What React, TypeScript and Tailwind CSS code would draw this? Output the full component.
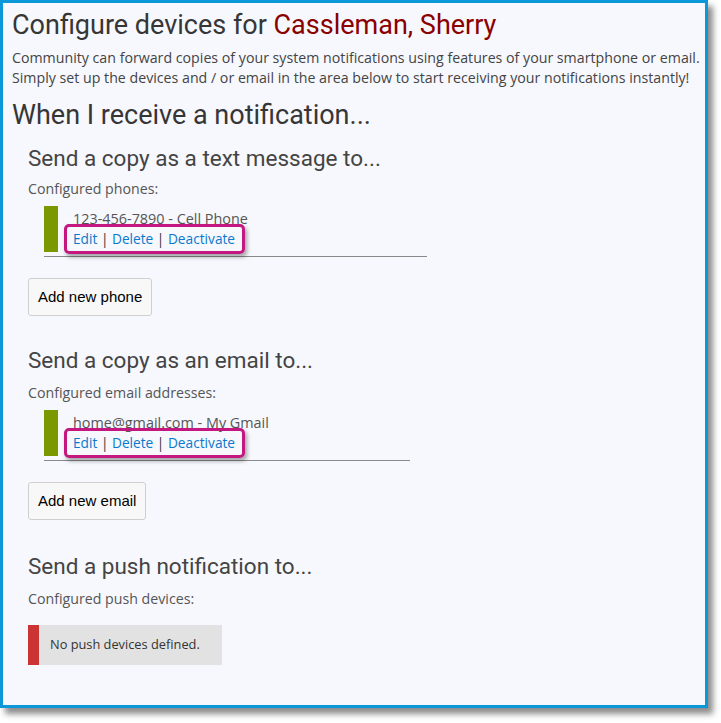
import React from "react";

function Item({ text, width }: { text: string; width: string }) {
  return (
    <div className={`ml-4 ${width}`}>
      <div className="flex items-stretch">
        <div className="w-[14px] bg-[#7a9900]" />
        <div className="pl-[15px] py-[3px] leading-[20px]">
          <div className="text-[#555] text-[14.4px]">{text}</div>
          <div className="text-[#0a78cc] text-[13.7px] relative">
            <span>Edit</span>
            <span className="text-[#333]"> | </span>
            <span>Delete</span>
            <span className="text-[#333]"> | </span>
            <span>Deactivate</span>
            <div className="absolute -left-[9px] -top-[5px] w-[181px] h-[30px] border-[3px] border-[#c4177f] rounded-[5px] shadow-[2px_3px_4px_rgba(0,0,0,0.35)]" />
          </div>
        </div>
      </div>
      <div className="mt-[4px] h-px bg-[#8a8a8a]" />
    </div>
  );
}

function Button({ label }: { label: string }) {
  return (
    <button className="h-[38px] px-[9px] border border-[#cfcfcf] rounded-[3px] bg-[#f8f8f8] text-black text-[15px] [font-family:'Liberation_Sans',Arial,sans-serif]">
      {label}
    </button>
  );
}

export default function App() {
  return (
    <div className="min-h-[723px] bg-white [font-family:'Open_Sans','Noto_Sans',sans-serif]">
      <div className="w-[708px] h-[708px] border-[3px] border-[#0a98d9] bg-[#f6f8fd] shadow-[5px_6px_6px_rgba(0,0,0,0.45)] pl-[9px] pr-[4px] pt-[5px]">
        <h1 className="[font-family:Roboto,sans-serif] text-[27px] leading-[34px] text-[#363636]">
          Configure devices for <span className="text-[#8b0000]">Cassleman, Sherry</span>
        </h1>
        <p className="mt-[6px] text-[14.2px] leading-[20px] text-[#444] whitespace-nowrap">
          Community can forward copies of your system notifications using features of your smartphone or email.
          <br />
          Simply set up the devices and / or email in the area below to start receiving your notifications instantly!
        </p>
        <h2 className="[font-family:Roboto,sans-serif] text-[27px] leading-[33px] text-[#363636] mt-[11px]">
          When I receive a notification...
        </h2>
        <div className="pl-4">
          <h3 className="[font-family:Roboto,sans-serif] text-[22.5px] leading-[28px] text-[#444] mt-[12px]">
            Send a copy as a text message to...
          </h3>
          <div className="text-[14.2px] leading-[20px] text-[#555] mt-[7px]">Configured phones:</div>
          <div className="mt-[7px]">
            <Item text="123-456-7890 - Cell Phone" width="w-[383px]" />
          </div>
          <div className="mt-[21px]">
            <Button label="Add new phone" />
          </div>

          <h3 className="[font-family:Roboto,sans-serif] text-[22.5px] leading-[28px] text-[#444] mt-[30px]">
            Send a copy as an email to...
          </h3>
          <div className="text-[14.2px] leading-[20px] text-[#555] mt-[9px]">Configured email addresses:</div>
          <div className="mt-[7px]">
            <Item text="home@gmail.com - My Gmail" width="w-[366px]" />
          </div>
          <div className="mt-[21px]">
            <Button label="Add new email" />
          </div>

          <h3 className="[font-family:Roboto,sans-serif] text-[22.5px] leading-[28px] text-[#444] mt-[32px]">
            Send a push notification to...
          </h3>
          <div className="text-[14.2px] leading-[20px] text-[#555] mt-[9px]">Configured push devices:</div>
          <div className="mt-[16px] flex w-[194px] h-[40px] bg-[#e2e2e2]">
            <div className="w-[11px] bg-[#cc3333]" />
            <div className="pl-[11px] flex items-center text-[12.8px] text-[#333]">No push devices defined.</div>
          </div>
        </div>
      </div>
    </div>
  );
}
